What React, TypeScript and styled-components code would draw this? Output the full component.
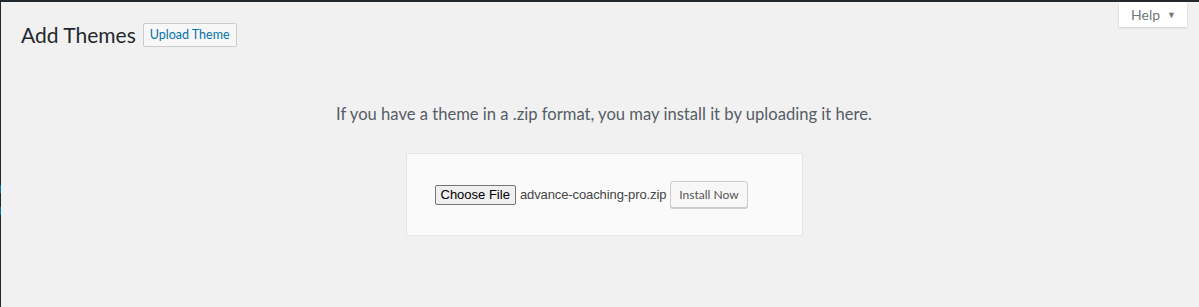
import React from "react";
import styled, { createGlobalStyle } from "styled-components";

const GlobalStyle = createGlobalStyle`
  html, body {
    margin: 0;
    padding: 0;
    background: #f1f1f1;
  }
  body {
    font-family: Lato, "Open Sans", "Liberation Sans", sans-serif;
  }
`;

export default function App() {
  return (
    <>
      <GlobalStyle />
      <StyledFrame>
        <StyledEdge>
          <StyledEdgeSegment $height={183} />
          <StyledEdgeSegment $height={8} $active />
          <StyledEdgeSegment $height={14} />
          <StyledEdgeSegment $height={8} $active />
          <StyledEdgeSegment $grow />
        </StyledEdge>
        <StyledMain>
          <StyledTopRow>
            <StyledHeading>
              <StyledTitle>Add Themes</StyledTitle>
              <StyledUploadButton>Upload Theme</StyledUploadButton>
            </StyledHeading>
            <StyledHelpTab>
              Help <StyledCaret>▼</StyledCaret>
            </StyledHelpTab>
          </StyledTopRow>
          <StyledUploadArea>
            <StyledHelpText>
              If you have a theme in a .zip format, you may install it by
              uploading it here.
            </StyledHelpText>
            <StyledForm>
              <StyledChooseButton>Choose File</StyledChooseButton>
              <StyledFileName>advance-coaching-pro.zip</StyledFileName>
              <StyledInstallButton>Install Now</StyledInstallButton>
            </StyledForm>
          </StyledUploadArea>
        </StyledMain>
      </StyledFrame>
    </>
  );
}

const StyledFrame = styled.div`
  display: flex;
  height: 305px;
  border-top: 2px solid #23282d;
  background: #f1f1f1;
  overflow: hidden;
`;

const StyledEdge = styled.div`
  display: flex;
  flex-direction: column;
  width: 1px;
  flex-shrink: 0;
`;

const StyledEdgeSegment = styled.div<{
  $height?: number;
  $active?: boolean;
  $grow?: boolean;
}>`
  height: ${(p) => (p.$height ? `${p.$height}px` : "auto")};
  flex: ${(p) => (p.$grow ? 1 : "none")};
  background: ${(p) => (p.$active ? "#0073aa" : "#23282d")};
`;

const StyledMain = styled.div`
  flex: 1;
  display: flex;
  flex-direction: column;
  padding: 0 12px 0 20px;
`;

const StyledTopRow = styled.div`
  display: flex;
  justify-content: space-between;
  align-items: flex-start;
`;

const StyledHeading = styled.div`
  display: flex;
  align-items: center;
  gap: 7px;
  padding-top: 18px;
`;

const StyledTitle = styled.h1`
  margin: 0;
  font-size: 21px;
  font-weight: 400;
  line-height: 29px;
  color: #23282d;
`;

const StyledUploadButton = styled.button`
  height: 24px;
  padding: 0 6px;
  border: 1px solid #ccc;
  border-radius: 2px;
  background: #f7f7f7;
  color: #0073aa;
  font-family: Lato, "Open Sans", sans-serif;
  font-size: 12.5px;
  font-weight: 400;
  line-height: 22px;
`;

const StyledHelpTab = styled.div`
  display: flex;
  align-items: center;
  gap: 7px;
  height: 25px;
  padding: 0 11px 0 12px;
  background: #fff;
  box-shadow: 0 1px 2px rgba(0, 0, 0, 0.15);
  color: #72777c;
  font-size: 14px;
`;

const StyledCaret = styled.span`
  font-size: 9px;
  color: #72777c;
`;

const StyledUploadArea = styled.div`
  display: flex;
  flex-direction: column;
  align-items: center;
`;

const StyledHelpText = styled.p`
  margin: 54px 0 0;
  font-size: 16.6px;
  line-height: 22px;
  color: #555d66;
`;

const StyledForm = styled.div`
  display: flex;
  align-items: center;
  margin-top: 28px;
  padding: 0 0 0 28px;
  box-sizing: border-box;
  width: 397px;
  height: 83px;
  border: 1px solid #e5e5e5;
  background: #fafafa;
`;

const StyledChooseButton = styled.button`
  height: 20px;
  padding: 0 5px;
  border: 1px solid #767676;
  border-radius: 2px;
  background: #efefef;
  color: #000;
  font-family: "Liberation Sans", Arial, sans-serif;
  font-size: 13px;
  line-height: 18px;
`;

const StyledFileName = styled.span`
  margin-left: 4px;
  font-family: "Liberation Sans", Arial, sans-serif;
  font-size: 13px;
  letter-spacing: -0.1px;
  color: #444;
`;

const StyledInstallButton = styled.button`
  height: 27px;
  margin-left: 4px;
  padding: 0 8px;
  border: 1px solid #ccc;
  border-radius: 3px;
  background: #f7f7f7;
  box-shadow: 0 1px 0 #ccc;
  color: #555;
  font-family: Lato, "Open Sans", sans-serif;
  font-size: 12px;
`;
